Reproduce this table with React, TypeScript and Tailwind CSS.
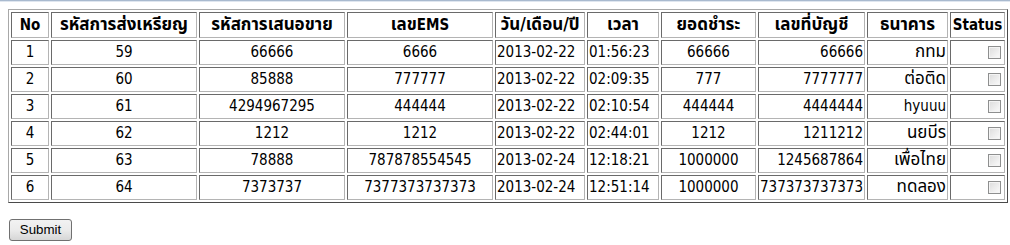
import React from 'react';

interface Row {
  no: number;
  coin: string;
  offer: string;
  ems: string;
  date: string;
  time: string;
  amount: string;
  account: string;
  bank: string;
}

const rows: Row[] = [
  { no: 1, coin: '59', offer: '66666', ems: '6666', date: '2013-02-22', time: '01:56:23', amount: '66666', account: '66666', bank: 'กทม' },
  { no: 2, coin: '60', offer: '85888', ems: '777777', date: '2013-02-22', time: '02:09:35', amount: '777', account: '7777777', bank: 'ต่อติด' },
  { no: 3, coin: '61', offer: '4294967295', ems: '444444', date: '2013-02-22', time: '02:10:54', amount: '444444', account: '4444444', bank: 'hyuuu' },
  { no: 4, coin: '62', offer: '1212', ems: '1212', date: '2013-02-22', time: '02:44:01', amount: '1212', account: '1211212', bank: 'นยบีร' },
  { no: 5, coin: '63', offer: '78888', ems: '787878554545', date: '2013-02-24', time: '12:18:21', amount: '1000000', account: '1245687864', bank: 'เพื่อไทย' },
  { no: 6, coin: '64', offer: '7373737', ems: '7377373737373', date: '2013-02-24', time: '12:51:14', amount: '1000000', account: '737373737373', bank: 'ทดลอง' },
];

// inset cell border, like an old table border="1"
const cell =
  'border border-solid border-t-[#6a6a6a] border-l-[#6a6a6a] border-r-[#b4b4b4] border-b-[#b4b4b4] px-px py-0 whitespace-nowrap leading-[19px]';

// Thai glyphs come out small in the fallback font, so bump them a little
const Th = ({ children }: { children: React.ReactNode }) => (
  <span className="text-[17px] leading-none">{children}</span>
);

const isThai = (s: string) => /[\u0E00-\u0E7F]/.test(s);

const Checkbox = () => (
  <span className="inline-block w-[13px] h-[13px] align-middle border border-[#8e8f8f] bg-gradient-to-br from-[#dcdcdc] to-[#fbfbfb] shadow-[inset_0_0_0_1px_#f4f4f4]" />
);

export default function App() {
  return (
    <div className="min-h-[245px] bg-white text-black px-2" style={{ fontFamily: '"DejaVu Sans Condensed", "Noto Sans Thai", "Tlwg Typo", Loma, "Noto Sans", sans-serif' }}>
      <div className="-mx-2 h-[2px] border-t border-[#a9bacf] bg-[#dfe6ef]" />

      <table className="mt-[7px] w-[1000px] table-fixed border-separate border-spacing-[2px] border border-solid border-t-[#a8a8a8] border-l-[#a8a8a8] border-r-[#4a4a4a] border-b-[#4a4a4a] text-[15px]">
        <thead>
          <tr className="font-bold text-center">
            <th className={`${cell} h-[26px] w-[38px]`}>No</th>
            <th className={`${cell} h-[26px] w-[146px]`}><Th>รหัสการส่งเหรียญ</Th></th>
            <th className={`${cell} h-[26px] w-[146px]`}><Th>รหัสการเสนอขาย</Th></th>
            <th className={`${cell} h-[26px] w-[146px]`}><Th>เลข</Th>EMS</th>
            <th className={`${cell} h-[26px] w-[90px]`}><Th>วัน/เดือน/ปี</Th></th>
            <th className={`${cell} h-[26px] w-[72px]`}><Th>เวลา</Th></th>
            <th className={`${cell} h-[26px] w-[95px]`}><Th>ยอดชำระ</Th></th>
            <th className={`${cell} h-[26px] w-[107px]`}><Th>เลขที่บัญชี</Th></th>
            <th className={`${cell} h-[26px] w-[81px]`}><Th>ธนาคาร</Th></th>
            <th className={`${cell} h-[26px] w-[55px]`}>Status</th>
          </tr>
        </thead>
        <tbody>
          {rows.map((r) => (
            <tr key={r.no}>
              <td className={`${cell} h-[25px] text-center`}>{r.no}</td>
              <td className={`${cell} h-[25px] text-center`}>{r.coin}</td>
              <td className={`${cell} h-[25px] text-center`}>{r.offer}</td>
              <td className={`${cell} h-[25px] text-center`}>{r.ems}</td>
              <td className={`${cell} h-[25px] text-left`}>{r.date}</td>
              <td className={`${cell} h-[25px] text-left`}>{r.time}</td>
              <td className={`${cell} h-[25px] text-center`}>{r.amount}</td>
              <td className={`${cell} h-[25px] text-right`}>{r.account}</td>
              <td className={`${cell} h-[25px] text-right`}>
                {isThai(r.bank) ? <Th>{r.bank}</Th> : r.bank}
              </td>
              <td className={`${cell} h-[25px] text-right pr-[3px]`}>
                <Checkbox />
              </td>
            </tr>
          ))}
        </tbody>
      </table>

      <button
        type="button"
        className="mt-[16px] ml-px h-[22px] w-[63px] rounded-[3px] border border-[#707070] bg-gradient-to-b from-[#f2f2f2] via-[#ebebeb] to-[#d6d6d6] text-[13.3px] leading-none text-black"
        style={{ fontFamily: '"Liberation Sans", Arial, sans-serif' }}
      >
        Submit
      </button>
    </div>
  );
}
